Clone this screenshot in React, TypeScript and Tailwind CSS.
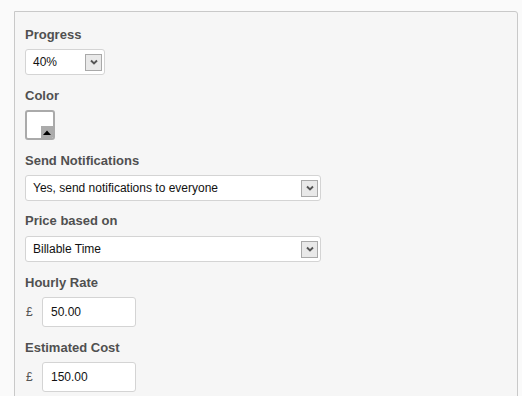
import React from "react";

function Chevron() {
  return (
    <svg width="8" height="6" viewBox="0 0 8 6" className="block">
      <path d="M1 1.5 L4 4.5 L7 1.5" fill="none" stroke="#555" strokeWidth="1.9" />
    </svg>
  );
}

function SelectBox({ value, width }: { value: string; width: string }) {
  return (
    <div
      className={`${width} h-[26px] bg-white border border-[#d4d4d4] rounded-[3px] flex items-center justify-between pl-[7px] pr-[2px]`}
    >
      <span className="text-[12px] text-[#111]">{value}</span>
      <div className="w-[17px] h-[17px] border border-[#a9a9a9] bg-[#e9e9e9] flex items-center justify-center">
        <Chevron />
      </div>
    </div>
  );
}

function Label({ children, className = "" }: { children: React.ReactNode; className?: string }) {
  return (
    <div className={`text-[13px] leading-[15px] font-bold text-[#505050] ${className}`}>{children}</div>
  );
}

function MoneyInput({ value }: { value: string }) {
  return (
    <div className="flex items-center">
      <span className="text-[12px] text-[#555] w-[17px] pl-[1px]">£</span>
      <div className="w-[94px] h-[30px] bg-white border border-[#d4d4d4] rounded-[3px] flex items-center pl-[8px]">
        <span className="text-[12px] text-[#111]">{value}</span>
      </div>
    </div>
  );
}

export default function App() {
  return (
    <div
      className="w-[522px] h-[396px] bg-[#fafafa] overflow-hidden pl-[14px] pt-[11px]"
      style={{ fontFamily: '"Liberation Sans", Arial, sans-serif' }}
    >
      <div className="w-[504px] h-[400px] bg-[#f6f6f6] border border-[#c9c9c9] rounded-tr-[3px] pl-[10px] pt-[15px]">
        <Label>Progress</Label>
        <div className="mt-[7px]">
          <SelectBox value="40%" width="w-[80px]" />
        </div>

        <Label className="mt-[13px]">Color</Label>
        <div className="mt-[7px] w-[30px] h-[30px] border-2 border-[#aaaaaa] rounded-[3px] bg-white relative overflow-hidden">
          <div className="absolute right-0 bottom-0 w-[12px] h-[12px] bg-[#ababab] flex items-center justify-center">
            <svg width="8" height="5" viewBox="0 0 8 5" className="block">
              <path d="M0 5 L4 0.5 L8 5 Z" fill="#000" />
            </svg>
          </div>
        </div>

        <Label className="mt-[13px]">Send Notifications</Label>
        <div className="mt-[7px]">
          <SelectBox value="Yes, send notifications to everyone" width="w-[296px]" />
        </div>

        <Label className="mt-[12px]">Price based on</Label>
        <div className="mt-[8px]">
          <SelectBox value="Billable Time" width="w-[296px]" />
        </div>

        <Label className="mt-[13px]">Hourly Rate</Label>
        <div className="mt-[7px]">
          <MoneyInput value="50.00" />
        </div>

        <Label className="mt-[13px]">Estimated Cost</Label>
        <div className="mt-[7px]">
          <MoneyInput value="150.00" />
        </div>
      </div>
    </div>
  );
}
